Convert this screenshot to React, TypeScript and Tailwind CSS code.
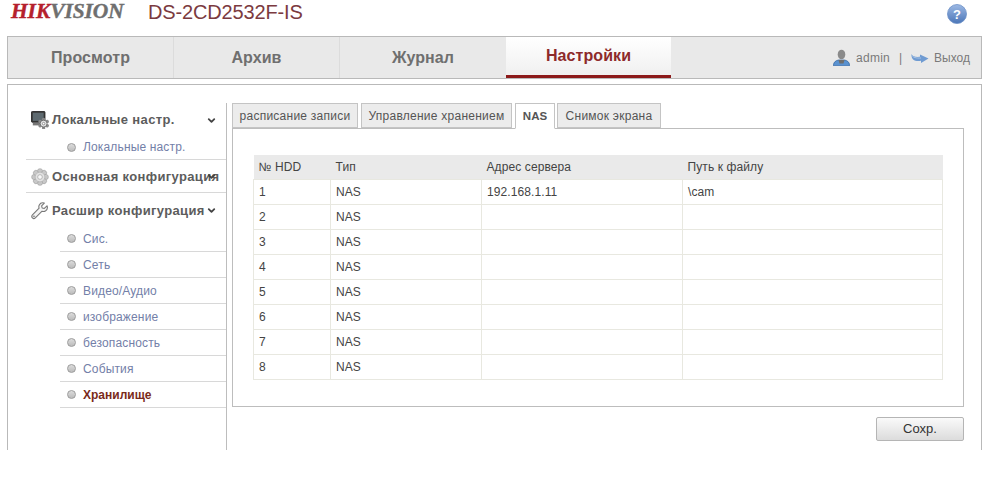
import React from "react";
import { ChevronDown } from "lucide-react";

const font = "font-['Liberation_Sans',Arial,sans-serif]";

const navItems = ["Просмотр", "Архив", "Журнал", "Настройки"];
const tabs = ["расписание записи", "Управление хранением", "NAS", "Снимок экрана"];
const subItems = ["Сис.", "Сеть", "Видео/Аудио", "изображение", "безопасность", "События", "Хранилище"];
const rows = [
  ["1", "NAS", "192.168.1.11", "\\cam"],
  ["2", "NAS", "", ""],
  ["3", "NAS", "", ""],
  ["4", "NAS", "", ""],
  ["5", "NAS", "", ""],
  ["6", "NAS", "", ""],
  ["7", "NAS", "", ""],
  ["8", "NAS", "", ""],
];

const Bullet = () => (
  <span className="mr-[8px] ml-[7px] h-[9px] w-[9px] shrink-0 rounded-full border border-[#9c9c9c] bg-gradient-to-b from-[#dcdcdc] to-[#bcbcbc]" />
);

const GearIcon = ({ size = 18 }: { size?: number }) => (
  <svg width={size} height={size} viewBox="0 0 20 20">
    <g fill="#c8c8c8" stroke="#999" strokeWidth="0.6">
      {[0, 45, 90, 135, 180, 225, 270, 315].map((a) => (
        <circle key={a} cx="10" cy="3.6" r="2.9" transform={`rotate(${a} 10 10)`} />
      ))}
    </g>
    <circle cx="10" cy="10" r="5.4" fill="#e2e2e2" stroke="#a5a5a5" strokeWidth="0.6" />
    <circle cx="10" cy="10" r="2.6" fill="#f8f8f8" stroke="#a5a5a5" strokeWidth="0.8" />
  </svg>
);

const MonitorIcon = () => (
  <svg width="18" height="18" viewBox="0 0 20 20">
    <rect x="0.5" y="0.5" width="15" height="12" rx="1" fill="#3a3a3a" stroke="#222" />
    <rect x="2" y="2" width="12" height="9" fill="#5e6a70" />
    <rect x="2" y="13" width="10" height="3" fill="#777" />
    <g fill="#8a8a8a">
      {[0, 60, 120, 180, 240, 300].map((a) => (
        <circle key={a} cx="14" cy="9.4" r="1.9" transform={`rotate(${a} 14 14)`} />
      ))}
    </g>
    <circle cx="14" cy="14" r="3.8" fill="#e6e6e6" stroke="#555" strokeWidth="0.8" />
    <circle cx="14" cy="14" r="1.4" fill="#fff" stroke="#666" strokeWidth="0.7" />
  </svg>
);

const WrenchIcon = () => (
  <svg width="18" height="18" viewBox="0 0 20 20" fill="#f4f4f4" stroke="#777" strokeWidth="1.2" strokeLinejoin="round">
    <path d="M17.8 4.2l-3 3-2.4-.6-.6-2.4 3-3c-2.2-.7-4.600.1-5.600 2-.6 1.200-.7 2.500-.2 3.700L1.600 14.400c-.9 1-.9 2.300 0 3.200.9.900 2.300.9 3.200 0l7.500-7.400c1.200.5 2.500.4 3.700-.2 1.900-1.100 2.600-3.600 1.800-5.800z" />
    <circle cx="3.300" cy="16" r="0.8" fill="#aaa" strokeWidth="0.6" />
  </svg>
);

const HelpIcon = () => (
  <svg width="20" height="20" viewBox="0 0 20 20">
    <defs>
      <linearGradient id="help" x1="0" y1="0" x2="0" y2="1">
        <stop offset="0" stopColor="#9db9e4" />
        <stop offset="1" stopColor="#4b76b8" />
      </linearGradient>
    </defs>
    <circle cx="10" cy="10" r="9.5" fill="url(#help)" stroke="#6b8fc6" strokeWidth="0.8" />
    <text x="10" y="14.500" textAnchor="middle" fontSize="13" fontWeight="700" fontFamily="Liberation Sans" fill="#fff">?</text>
  </svg>
);

const UserIcon = () => (
  <svg width="17" height="17" viewBox="0 0 17 17">
    <path d="M0.500 16c0-3 2.500-4.500 5-5h6c2.500.5 5 2 5 5v.8H.5z" fill="#5a92d0" stroke="#2e639f" strokeWidth="0.7" />
    <path d="M5.500 11h6l-1 3.500h-4z" fill="#6e6e6e" />
    <ellipse cx="8.500" cy="5.500" rx="3.800" ry="4.800" fill="#8a8a8a" />
  </svg>
);

const LogoutIcon = () => (
  <svg width="18" height="12" viewBox="0 0 18 12">
    <path d="M0.500 2c.8 2.200 3.500 3.200 8.500 2.800V2.500l8.500 4-7.500 4.500V8.800C4.500 9.800 0 8 .5 2z" fill="#6f9bd2" />
    <path d="M1 3.500C2 5.500 5 6.200 10 6" stroke="#a9c4e6" strokeWidth="1" fill="none" />
  </svg>
);

const Chevron = () => <ChevronDown size={11} strokeWidth={4} className="text-[#444]" />;

const SideHead = ({ icon, label, chevron, className }: { icon: React.ReactNode; label: string; chevron?: React.ReactNode; className: string }) => (
  <div className={`relative flex items-center pl-[4px] ${className}`}>
    <span className="mr-[2px] flex w-[20px] justify-center">{icon}</span>
    <span className="text-[13px] font-bold tracking-[0.35px] whitespace-nowrap text-[#5c5c5c]">{label}</span>
    {chevron}
  </div>
);

export default function App() {
  return (
    <div className={`${font} h-[480px] w-[988px] bg-white`}>
      <header className="flex h-[36px] items-start">
        <span className="ml-[11px] w-[137px] pt-[1px] font-['Liberation_Serif',serif] text-[21.5px] leading-[20px] font-bold tracking-[-0.1px] italic [-webkit-text-stroke:0.4px]">
          <span className="text-[#b5202c]">HIK</span>
          <span className="text-[#6f6f6f]">VISION</span>
        </span>
        <span className="text-[20px] leading-[24px] tracking-[-0.15px] text-[#7b3a40]">DS-2CD2532F-IS</span>
        <span className="mt-[4px] mr-[21px] ml-auto"><HelpIcon /></span>
      </header>

      <nav className="mx-[7px] flex h-[43px] w-[975px] border-[1.5px] border-[#b9b9b9] bg-[#e9e9e9]">
        {navItems.map((item, i) => (
          <div
            key={item}
            className={`flex h-full items-center justify-center text-[16px] font-bold tracking-[0.08px] ${
              i === 3
                ? "w-[165px] border-b-[3px] border-[#8c1a1a] bg-gradient-to-b from-white to-[#f0f0f0] text-[#8d2a2a]"
                : i === 2
                  ? "w-[166px] text-[#6f6f6f]"
                  : "w-[166px] border-r border-[#dcdcdc] text-[#6f6f6f]"
            }`}
          >
            {item}
          </div>
        ))}
        <div className="ml-auto flex items-center pr-[11px] text-[12px] text-[#7a7a7a]">
          <UserIcon />
          <span className="ml-[6px] tracking-[0.25px]">admin</span>
          <span className="mx-[9px]">|</span>
          <LogoutIcon />
          <span className="ml-[5px]">Выход</span>
        </div>
      </nav>

      <main className="mx-[7px] mt-[5px] flex h-[366px] w-[975px] border-x-[1.5px] border-t-[1.5px] border-[#b9b9b9] pt-[18px] pl-[18px]">
        <aside className="h-full w-[201px] shrink-0 border-r-[1.5px] border-[#bdbdbd]">
          <SideHead
            icon={<MonitorIcon />}
            label="Локальные настр."
            className="h-[32px] pt-[2px]"
            chevron={<span className="absolute left-[180px]"><Chevron /></span>}
          />
          <div className="flex h-[25px] items-center border-b border-[#d8d8d8] pl-[34px] text-[12px] text-[#7380a8]">
            <Bullet />
            <span className="ml-[-1px] tracking-[0.15px]">Локальные настр.</span>
          </div>
          <SideHead
            icon={<GearIcon />}
            label="Основная конфигурация"
            className="h-[33px] border-b border-[#d8d8d8] pt-[1px]"
            chevron={<span className="absolute left-[180px]"><Chevron /></span>}
          />
          <SideHead
            icon={<WrenchIcon />}
            label="Расшир конфигурация"
            className="h-[33px] pt-[2px]"
            chevron={<span className="absolute left-[180px]"><Chevron /></span>}
          />
          <div className="ml-[34px]">
            {subItems.map((item) => (
              <div key={item} className="flex h-[26px] items-center border-b border-[#d8d8d8] text-[12px]">
                <Bullet />
                {item === "Хранилище" ? (
                  <span className="ml-[-1px] font-bold text-[#7a2a1a]">{item}</span>
                ) : (
                  <span className="ml-[-1px] tracking-[0.15px] text-[#7380a8]">{item}</span>
                )}
              </div>
            ))}
          </div>
        </aside>

        <section className="ml-[5px] w-[732px] shrink-0">
          <div className="flex h-[25px] items-end">
            {tabs.map((tab) => (
              <div
                key={tab}
                className={`relative flex items-center justify-center border border-[#c4c4c4] pt-[1px] ${
                  tab === "NAS"
                    ? "z-10 mb-[-1px] ml-[3px] h-[26px] w-[40px] border-b-white bg-white text-[11.5px] font-bold text-[#555]"
                    : tab === "Снимок экрана"
                      ? "ml-[2px] h-[25px] w-[104px] bg-[#ececec] text-[12px] tracking-[0.25px] text-[#555]"
                      : tab === "Управление хранением"
                        ? "ml-[3px] h-[25px] w-[151px] bg-[#ececec] text-[12px] tracking-[0.25px] text-[#555]"
                        : "h-[25px] w-[126px] bg-[#ececec] text-[12px] tracking-[0.25px] text-[#555]"
                }`}
              >
                {tab}
              </div>
            ))}
          </div>
          <div className="h-[279px] border border-[#bdbdbd] px-[20px] pt-[26px]">
            <table className="w-[690px] table-fixed border-collapse text-[12px] tracking-[0.1px] text-[#444]">
              <colgroup>
                <col className="w-[77px]" />
                <col className="w-[151px]" />
                <col className="w-[201px]" />
                <col />
              </colgroup>
              <thead>
                <tr className="h-[24px] bg-[#eaeaea]">
                  {["№ HDD", "Тип", "Адрес сервера", "Путь к файлу"].map((h) => (
                    <th key={h} className="pr-[6px] pl-[5px] text-left font-normal">{h}</th>
                  ))}
                </tr>
              </thead>
              <tbody>
                {rows.map((row) => (
                  <tr key={row[0]} className="h-[25px]">
                    {row.map((cell, i) => (
                      <td key={i} className="border border-[#e8e8e0] pr-[6px] pl-[5px]">{cell}</td>
                    ))}
                  </tr>
                ))}
              </tbody>
            </table>
          </div>
          <div className="mt-[10px] flex justify-end">
            <button className="h-[24px] w-[88px] rounded-[2px] border border-[#b5b5b5] bg-gradient-to-b from-[#fafafa] to-[#dcdcdc] text-[13px] text-[#333]">
              Сохр.
            </button>
          </div>
        </section>
      </main>
    </div>
  );
}
